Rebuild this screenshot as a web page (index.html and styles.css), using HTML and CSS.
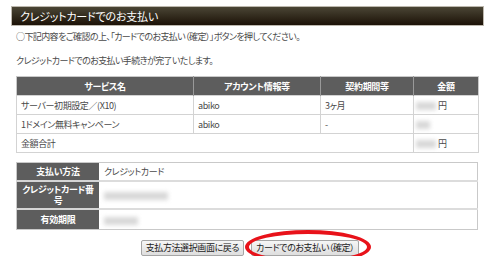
FILE: index.html
```html
<!DOCTYPE html>
<html lang="ja">
<head>
<meta charset="utf-8">
<link rel="stylesheet" href="styles.css">
</head>
<body>
<div class="page">
  <h1 class="title">クレジットカードでのお支払い</h1>
  <p class="note">○下記内容をご確認の上、「カードでのお支払い（確定）」ボタンを押してください。</p>
  <p class="note">クレジットカードでのお支払い手続きが完了いたします。</p>

  <table class="items">
    <colgroup><col class="c1"><col class="c2"><col class="c3"><col class="c4"></colgroup>
    <thead>
      <tr><th>サービス名</th><th>アカウント情報等</th><th>契約期間等</th><th>金額</th></tr>
    </thead>
    <tbody>
      <tr><td>サーバー初期設定／(X10)</td><td>abiko</td><td>3ヶ月</td><td class="amt"><span class="blur w20"></span>円</td></tr>
      <tr><td>1ドメイン無料キャンペーン</td><td>abiko</td><td>-</td><td class="amt"><span class="blur w14"></span></td></tr>
      <tr><td colspan="3">金額合計</td><td class="amt"><span class="blur w20"></span>円</td></tr>
    </tbody>
  </table>

  <table class="pay">
    <tr class="r1"><th>支払い方法</th><td>クレジットカード</td></tr>
    <tr class="r2"><th>クレジットカード番号</th><td><span class="blur w64"></span></td></tr>
    <tr class="r3"><th>有効期限</th><td><span class="blur w34"></span></td></tr>
  </table>

  <div class="actions">
    <button class="btn" type="button">支払方法選択画面に戻る</button>
    <button class="btn btn-mark" type="button">カードでのお支払い（確定）</button>
  </div>
</div>
</body>
</html>
```

FILE: styles.css
```css
html, body {
  margin: 0;
  padding: 0;
  background: #fff;
}
body {
  font-family: "Noto Sans CJK JP", "Liberation Sans", sans-serif;
  font-feature-settings: "palt";
  color: #4a4a4a;
  font-size: 9px;
}
.page {
  width: 498px;
  padding-top: 6px;
}
.title {
  margin: 0 14px 0 11px;
  height: 18px;
  border: 1px solid #bdb8ae;
  background: linear-gradient(#4a4535, #1c1207);
  color: #fff;
  font-size: 11px;
  font-weight: normal;
  line-height: 18px;
  padding-left: 8px;
  letter-spacing: -0.2px;
}
.note {
  margin: 0 0 0 16px;
  height: 24px;
  line-height: 24px;
  letter-spacing: -0.6px;
}
.note:first-of-type {
  margin-top: -1px;
}
table {
  border-collapse: collapse;
  width: 462px;
  margin-left: 16px;
  table-layout: fixed;
}
.items {
  margin-top: 3px;
  border: 1px solid #c9c9c9;
}
.c1 { width: 177px; }
.c2 { width: 127px; }
.c3 { width: 93px; }
.c4 { width: 65px; }
.items th {
  background: #5d5d5d;
  color: #fff;
  height: 18px;
  padding: 0;
  font-weight: bold;
  border-right: 1px solid #999;
  text-align: center;
  letter-spacing: -0.3px;
}
.items th:last-child { border-right: none; }
.items td {
  height: 18px;
  padding: 0 0 0 4px;
  border: 1px solid #d3d3d3;
  font-size: 9px;
  letter-spacing: -0.4px;
}
.items td.amt { padding-left: 2px; }
.blur {
  display: inline-block;
  vertical-align: middle;
  height: 8px;
  background: #d8d8d8;
  filter: blur(2px);
  margin-right: 2px;
}
.w14 { width: 14px; }
.w20 { width: 20px; }
.w34 { width: 34px; }
.w64 { width: 64px; }
.pay {
  margin-top: 9px;
  border: 1px solid #c9c9c9;
}
.pay th {
  width: 78px;
  background: #5d5d5d;
  color: #fff;
  font-weight: bold;
  padding: 0 2px;
  text-align: center;
  line-height: 11px;
  border-bottom: 2px solid #d5d5d5;
  letter-spacing: -0.3px;
}
.pay tr:last-child th { border-bottom: none; }
.pay td {
  padding: 0 0 0 5px;
  border-bottom: 2px solid #dcdcdc;
  letter-spacing: -0.4px;
}
.pay tr:last-child td { border-bottom: none; }
.pay .r1 th, .pay .r1 td { height: 17px; }
.pay .r2 th, .pay .r2 td { height: 26px; }
.pay .r3 th, .pay .r3 td { height: 19px; }
.actions {
  display: flex;
  justify-content: center;
  gap: 7px;
  margin-top: 10px;
  padding-left: 2px;
}
.btn {
  font-family: inherit;
  font-feature-settings: "palt";
  font-size: 9px;
  color: #222;
  height: 16px;
  padding: 0 4px;
  border: 1px solid #a5a5a5;
  border-radius: 2px;
  background: linear-gradient(#f6f6f6, #dedede);
  line-height: 14px;
  letter-spacing: -0.4px;
}
.btn-mark {
  position: relative;
}
.btn-mark::after {
  content: "";
  position: absolute;
  left: -7px;
  right: -13px;
  top: -11px;
  bottom: -9px;
  border: 4px solid #e8121a;
  border-radius: 50%;
  pointer-events: none;
}
```
